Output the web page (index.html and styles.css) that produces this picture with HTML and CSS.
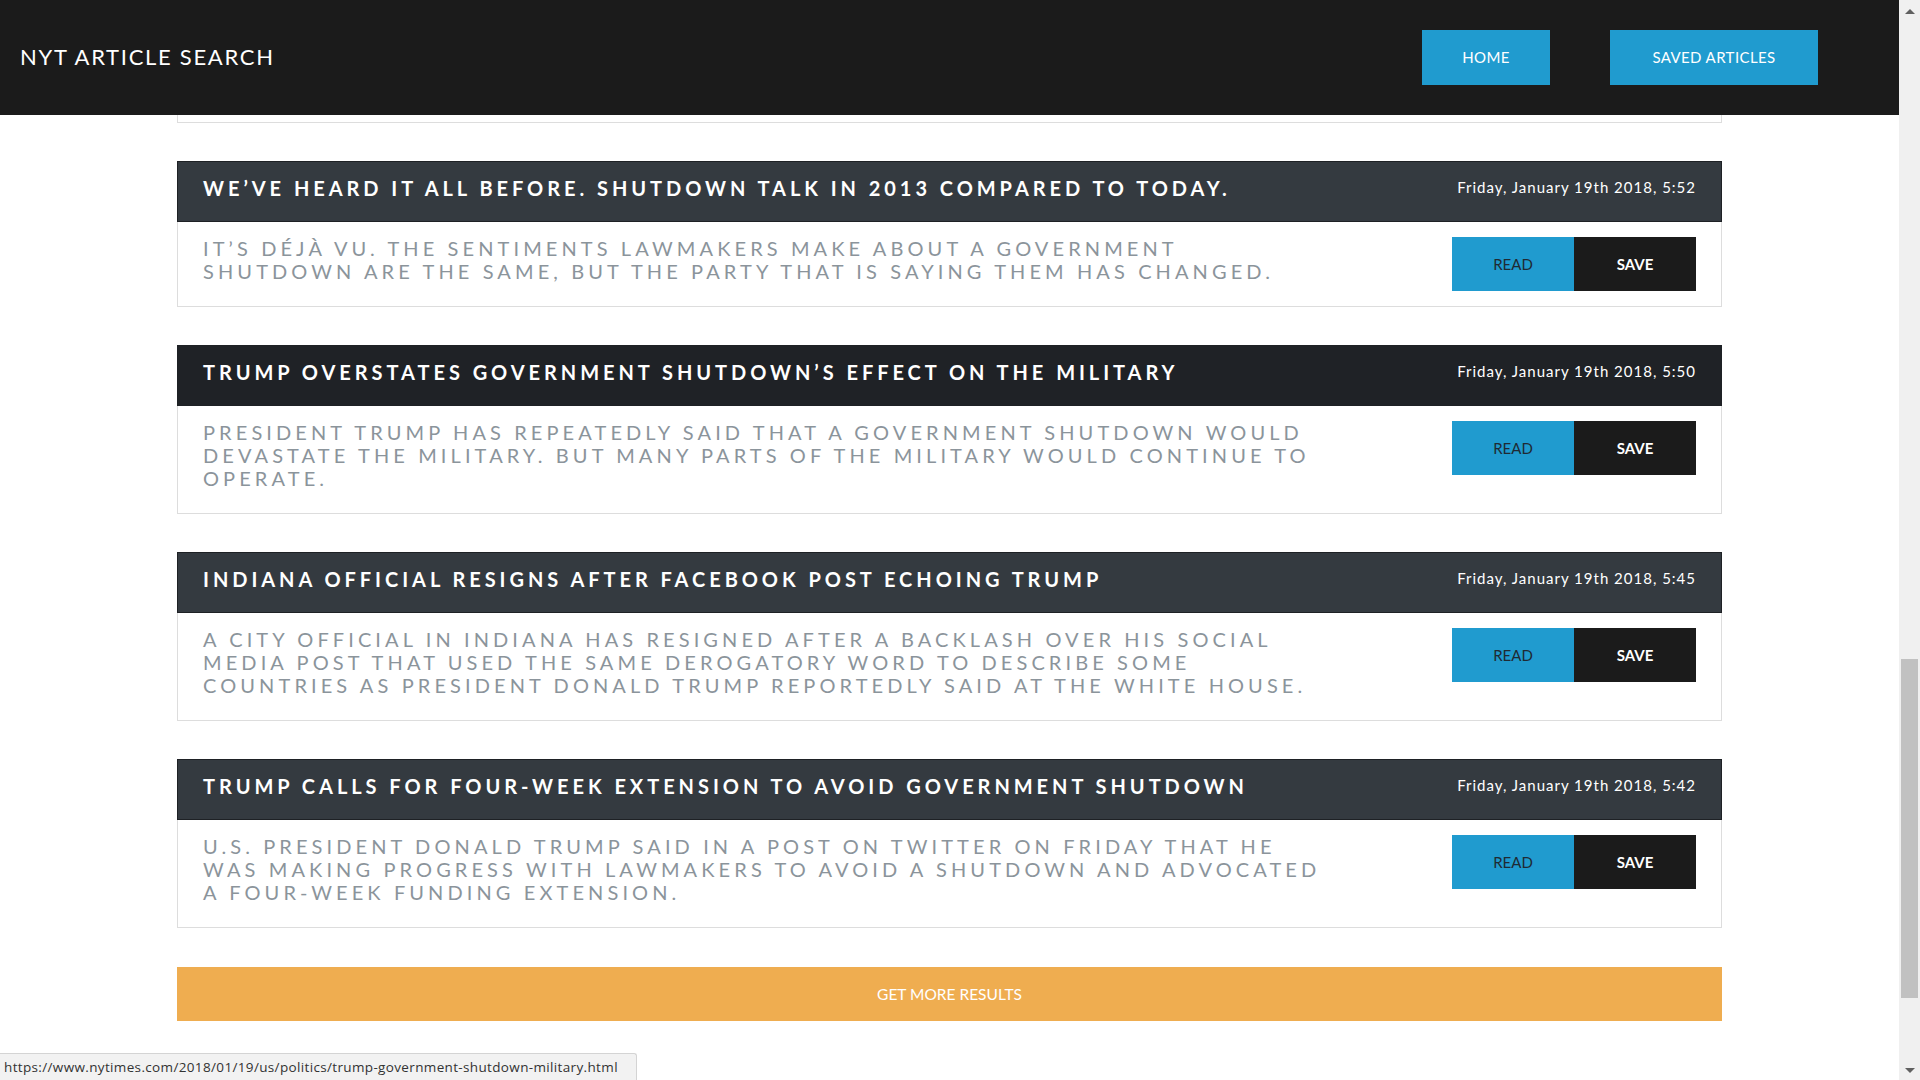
FILE: index.html
```html
<!DOCTYPE html>
<html lang="en">
<head>
<meta charset="utf-8">
<title>NYT Article Search</title>
<link rel="stylesheet" href="styles.css">
</head>
<body>
<div class="page">
  <nav class="navbar">
    <a class="brand" href="#">NYT ARTICLE SEARCH</a>
    <div class="nav-links">
      <a class="nav-btn nav-home" href="#">HOME</a>
      <a class="nav-btn nav-saved" href="#">SAVED ARTICLES</a>
    </div>
  </nav>

  <main class="results">
    <article class="card card-under-bar" aria-hidden="true">
      <header class="card-head">
        <h2 class="card-title">SENATE LEADERS SCRAMBLE AS DEADLINE APPROACHES</h2>
        <span class="card-date">Friday, January 19th 2018, 6:01</span>
      </header>
      <div class="card-body">
        <p class="card-text">LAWMAKERS WORKED LATE INTO THE NIGHT AS THE DEADLINE<br>FOR A SPENDING DEAL DREW CLOSER.</p>
        <div class="card-actions"><a class="btn btn-read" href="#">READ</a><a class="btn btn-save" href="#">SAVE</a></div>
      </div>
    </article>

    <article class="card">
      <header class="card-head">
        <h2 class="card-title">WE’VE HEARD IT ALL BEFORE. SHUTDOWN TALK IN 2013 COMPARED TO TODAY.</h2>
        <span class="card-date">Friday, January 19th 2018, 5:52</span>
      </header>
      <div class="card-body">
        <p class="card-text">IT’S DÉJÀ VU. THE SENTIMENTS LAWMAKERS MAKE ABOUT A GOVERNMENT<br>SHUTDOWN ARE THE SAME, BUT THE PARTY THAT IS SAYING THEM HAS CHANGED.</p>
        <div class="card-actions"><a class="btn btn-read" href="#">READ</a><a class="btn btn-save" href="#">SAVE</a></div>
      </div>
    </article>

    <article class="card card-hover">
      <header class="card-head">
        <h2 class="card-title">TRUMP OVERSTATES GOVERNMENT SHUTDOWN’S EFFECT ON THE MILITARY</h2>
        <span class="card-date">Friday, January 19th 2018, 5:50</span>
      </header>
      <div class="card-body">
        <p class="card-text">PRESIDENT TRUMP HAS REPEATEDLY SAID THAT A GOVERNMENT SHUTDOWN WOULD<br>DEVASTATE THE MILITARY. BUT MANY PARTS OF THE MILITARY WOULD CONTINUE TO<br>OPERATE.</p>
        <div class="card-actions"><a class="btn btn-read" href="#">READ</a><a class="btn btn-save" href="#">SAVE</a></div>
      </div>
    </article>

    <article class="card">
      <header class="card-head">
        <h2 class="card-title">INDIANA OFFICIAL RESIGNS AFTER FACEBOOK POST ECHOING TRUMP</h2>
        <span class="card-date">Friday, January 19th 2018, 5:45</span>
      </header>
      <div class="card-body">
        <p class="card-text">A CITY OFFICIAL IN INDIANA HAS RESIGNED AFTER A BACKLASH OVER HIS SOCIAL<br>MEDIA POST THAT USED THE SAME DEROGATORY WORD TO DESCRIBE SOME<br>COUNTRIES AS PRESIDENT DONALD TRUMP REPORTEDLY SAID AT THE WHITE HOUSE.</p>
        <div class="card-actions"><a class="btn btn-read" href="#">READ</a><a class="btn btn-save" href="#">SAVE</a></div>
      </div>
    </article>

    <article class="card">
      <header class="card-head">
        <h2 class="card-title">TRUMP CALLS FOR FOUR-WEEK EXTENSION TO AVOID GOVERNMENT SHUTDOWN</h2>
        <span class="card-date">Friday, January 19th 2018, 5:42</span>
      </header>
      <div class="card-body">
        <p class="card-text">U.S. PRESIDENT DONALD TRUMP SAID IN A POST ON TWITTER ON FRIDAY THAT HE<br>WAS MAKING PROGRESS WITH LAWMAKERS TO AVOID A SHUTDOWN AND ADVOCATED<br>A FOUR-WEEK FUNDING EXTENSION.</p>
        <div class="card-actions"><a class="btn btn-read" href="#">READ</a><a class="btn btn-save" href="#">SAVE</a></div>
      </div>
    </article>

    <button class="more-btn" type="button">GET MORE RESULTS</button>
  </main>

  <div class="status-bubble">https://www.nytimes.com/2018/01/19/us/politics/trump-government-shutdown-military.html</div>
</div>

<div class="scrollbar">
  <span class="sb-arrow sb-up"></span>
  <div class="sb-track">
    <div class="sb-thumb"></div>
  </div>
  <span class="sb-arrow sb-down"></span>
</div>
</body>
</html>
```

FILE: styles.css
```css
html, body {
  margin: 0;
  padding: 0;
  height: 100%;
}

body {
  display: flex;
  overflow: hidden;
  background: #ffffff;
  font-family: "Lato", "Open Sans", sans-serif;
}

.page {
  flex: 1 1 auto;
  height: 100vh;
  overflow: hidden;
  position: relative;
}

.navbar {
  position: relative;
  z-index: 5;
  height: 115px;
  background: #1b1b1b;
  display: flex;
  align-items: center;
  justify-content: space-between;
  padding: 0 81px 0 20px;
}

.brand {
  color: #ffffff;
  text-decoration: none;
  font-size: 22px;
  letter-spacing: 1.7px;
  font-weight: 400;
  margin-bottom: 2px;
}

.nav-links {
  display: flex;
  gap: 60px;
  margin-top: -1px;
}

.nav-btn {
  display: flex;
  align-items: center;
  justify-content: center;
  height: 55px;
  background: #209bcf;
  color: #ffffff;
  text-decoration: none;
  font-size: 15px;
  letter-spacing: 0.4px;
}

.nav-home { width: 128px; }
.nav-saved { width: 208px; }

/* ---------- results (page scrolled so the first card sits under the bar) ---------- */
.results {
  width: 1545px;
  margin: -138px auto 0;
  display: flex;
  flex-direction: column;
}

.card {
  margin-bottom: 38px;
}

.card-under-bar .card-head > *,
.card-under-bar .card-body > * {
  visibility: hidden;
}

.card-head {
  box-sizing: border-box;
  height: 61px;
  background: #343a40;
  border: 1px solid #1e2125;
  display: flex;
  align-items: center;
  justify-content: space-between;
  padding: 0 25px 7px;
}

.card-hover .card-head {
  background: #1f2226;
}

.card-title {
  margin: 0;
  color: #ffffff;
  font-size: 20px;
  font-weight: 700;
  letter-spacing: 3.95px;
  white-space: nowrap;
}

.card-date {
  color: #ffffff;
  font-size: 15px;
  letter-spacing: 1px;
  white-space: nowrap;
  margin-bottom: 2px;
}

.card-body {
  border: 1px solid #dddddd;
  border-top: none;
  padding: 15px 25px 15px 25px;
  display: flex;
  justify-content: space-between;
  align-items: flex-start;
}

.card-text {
  margin: 0 0 8px;
  color: #8b949b;
  font-size: 20px;
  line-height: 23px;
  letter-spacing: 4.1px;
  white-space: nowrap;
}

.card-actions {
  display: flex;
  flex: none;
}

.btn {
  display: flex;
  align-items: center;
  justify-content: center;
  width: 122px;
  height: 54px;
  font-size: 15px;
  text-decoration: none;
}

.btn-read {
  background: #209bcf;
  color: #1f2a33;
}

.btn-save {
  background: #1b1b1b;
  color: #ffffff;
  font-weight: 700;
}

.more-btn {
  height: 54px;
  margin-top: 1px;
  border: none;
  background: #efad50;
  color: #ffffff;
  font-family: inherit;
  font-size: 15.5px;
  cursor: pointer;
}

/* ---------- browser status bubble ---------- */
.status-bubble {
  position: absolute;
  left: 0;
  bottom: 0;
  box-sizing: border-box;
  width: 637px;
  height: 27px;
  padding: 4px 0 0 4px;
  background: #f2f2f2;
  border-top: 1px solid #d4d4d4;
  border-right: 1px solid #d4d4d4;
  border-top-right-radius: 3px;
  color: #333333;
  font-family: "Open Sans", "Liberation Sans", sans-serif;
  font-size: 13.5px;
  letter-spacing: 0.35px;
  white-space: nowrap;
}

/* ---------- scrollbar ---------- */
.scrollbar {
  flex: 0 0 21px;
  height: 100vh;
  background: #f0f0f0;
  display: flex;
  flex-direction: column;
  align-items: center;
}

.sb-arrow {
  width: 0;
  height: 0;
  border-left: 5px solid transparent;
  border-right: 5px solid transparent;
  flex: none;
}

.sb-up {
  margin: 9px 0 0;
  border-bottom: 5px solid #606060;
}

.sb-down {
  margin: 0 0 7px;
  border-top: 5px solid #606060;
}

.sb-track {
  flex: 1;
  width: 100%;
  display: flex;
  flex-direction: column;
  align-items: flex-end;
}

.sb-thumb {
  width: 17px;
  margin: 645px 2px 0 0;
  height: 339px;
  background: #c1c1c1;
}
```
